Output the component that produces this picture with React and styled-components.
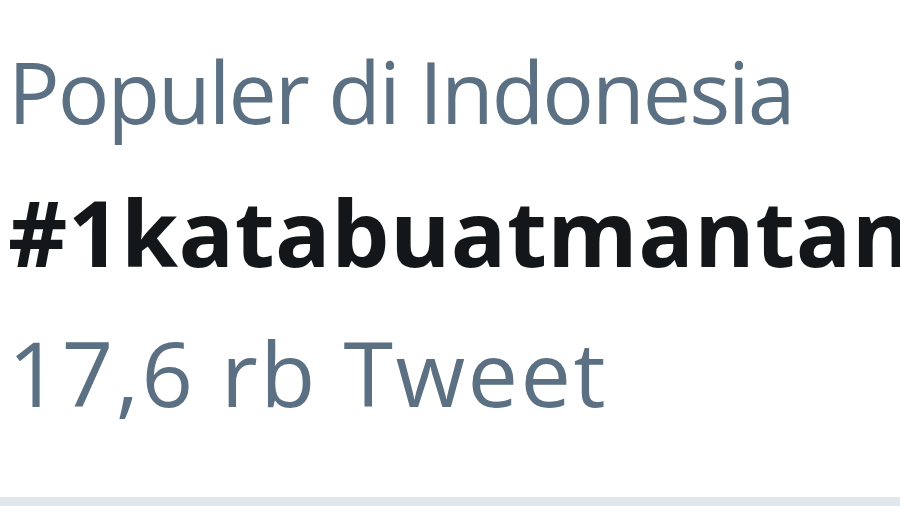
import React from "react";
import styled, { createGlobalStyle } from "styled-components";

const GlobalStyle = createGlobalStyle`
  html, body {
    margin: 0;
    padding: 0;
    background: #ffffff;
    overflow: hidden;
  }
`;

const TrendItem = () => {
  return (
    <Wrapper>
      <GlobalStyle />
      <Meta $size={86} $spacing={-2} $height={138}>
        Populer di Indonesia
      </Meta>
      <Tag>#1katabuatmantan</Tag>
      <Meta $size={90} $spacing={2.4} $height={120}>
        17,6 rb Tweet
      </Meta>
    </Wrapper>
  );
};

const Wrapper = styled.section`
  width: 900px;
  height: 506px;
  box-sizing: border-box;
  padding: 48px 0 0 8px;
  border-bottom: 9px solid #e1e8ed;
  display: flex;
  flex-direction: column;
  font-family: "Open Sans", "DejaVu Sans", sans-serif;
  white-space: nowrap;
  overflow: hidden;
`;

const Meta = styled.div`
  color: #5b7083;
  font-size: ${({ $size }) => $size}px;
  letter-spacing: ${({ $spacing }) => $spacing}px;
  line-height: 1;
  height: ${({ $height }) => $height}px;
  flex-shrink: 0;
`;

const Tag = styled.div`
  color: #14171a;
  font-size: 92px;
  font-weight: 700;
  letter-spacing: 0.5px;
  line-height: 1;
  height: 141px;
  flex-shrink: 0;
`;

export default TrendItem;
